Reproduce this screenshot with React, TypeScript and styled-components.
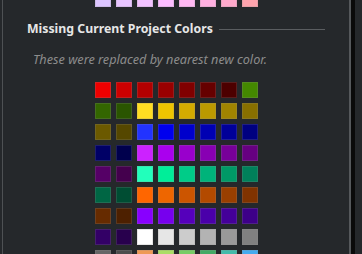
import React from "react";
import styled, { createGlobalStyle } from "styled-components";

const GlobalStyle = createGlobalStyle`
  html, body {
    margin: 0;
    padding: 0;
    background: #25282b;
    overflow: hidden;
  }
  body {
    font-family: "Noto Sans", "Open Sans", sans-serif;
  }
`;

const Frame = styled.div`
  display: flex;
  height: 254px;
  width: 362px;
  background: #25282b;
  overflow: hidden;
`;

const Panel = styled.div`
  flex: 1;
  margin-left: 2px;
  border-left: 1px solid #4e5154;
  border-right: 2px solid #55585b;
  overflow: hidden;
`;

const Track = styled.div`
  width: 4px;
  background: #0a0a0a;
`;

const Gutter = styled.div`
  width: 7px;
`;

const Swatches = styled.div<{ $offset?: number }>`
  display: grid;
  grid-template-columns: repeat(8, 16px);
  gap: 5px;
  justify-content: center;
  margin-top: ${(p) => p.$offset ?? 0}px;
`;

const Swatch = styled.div`
  width: 16px;
  height: 16px;
  box-sizing: border-box;
  border: 1px solid rgba(140, 140, 140, 0.22);
`;

const Heading = styled.div`
  display: flex;
  align-items: center;
  gap: 6px;
  padding: 0 24px;
  margin-top: 14px;
`;

const HeadingText = styled.span`
  font-size: 12.3px;
  font-weight: 700;
  line-height: 16px;
  color: #e6e6e6;
  white-space: nowrap;
`;

const Rule = styled.div`
  flex: 1;
  height: 1px;
  background: #5a5d60;
`;

const Note = styled.div`
  padding: 0 30px;
  margin: 14px 0 15px;
  font-size: 12.7px;
  font-style: italic;
  line-height: 16px;
  color: #8c8c8c;
  white-space: nowrap;
`;

const previous = [
  "#dcc5ff", "#e8c5ff", "#f2c2ff", "#fcbdff",
  "#ffb8f2", "#ffb0e0", "#ffaacc", "#ffa4ae",
];

const missing = [
  "#ee0000", "#cc0000", "#b30000", "#990000", "#800000", "#660000", "#4d0000", "#448800",
  "#336600", "#2a5500", "#ffdd22", "#eec400", "#d4ab00", "#bb9900", "#a08400", "#886f00",
  "#6b5900", "#554700", "#2233ff", "#0000ee", "#0000cc", "#0000b3", "#000099", "#000080",
  "#000066", "#00004d", "#cc22ff", "#aa00ee", "#9900cc", "#8800b3", "#770099", "#660080",
  "#550066", "#44004d", "#22ffbb", "#00ee99", "#00cc88", "#00b37a", "#009966", "#00805a",
  "#006644", "#004d33", "#ff6600", "#ee6600", "#cc5500", "#b34a00", "#993f00", "#803300",
  "#662b00", "#4d2000", "#8800ff", "#7700ee", "#5500bb", "#4a00aa", "#440099", "#3d0088",
  "#330066", "#28004d", "#ffffff", "#e6e6e6", "#cccccc", "#b3b3b3", "#999999", "#808080",
  "#666666", "#4d4d4d", "#ee9955", "#aadd66", "#77cc66", "#44aa66", "#44bbaa", "#44aaee",
];

export default function App() {
  return (
    <>
      <GlobalStyle />
      <Frame>
        <Panel>
          <Swatches $offset={-9}>
            {previous.map((c, i) => (
              <Swatch key={i} style={{ background: c }} />
            ))}
          </Swatches>
          <Heading>
            <HeadingText>Missing Current Project Colors</HeadingText>
            <Rule />
          </Heading>
          <Note>These were replaced by nearest new color.</Note>
          <Swatches>
            {missing.map((c, i) => (
              <Swatch key={i} style={{ background: c }} />
            ))}
          </Swatches>
        </Panel>
        <Track />
        <Gutter />
      </Frame>
    </>
  );
}
